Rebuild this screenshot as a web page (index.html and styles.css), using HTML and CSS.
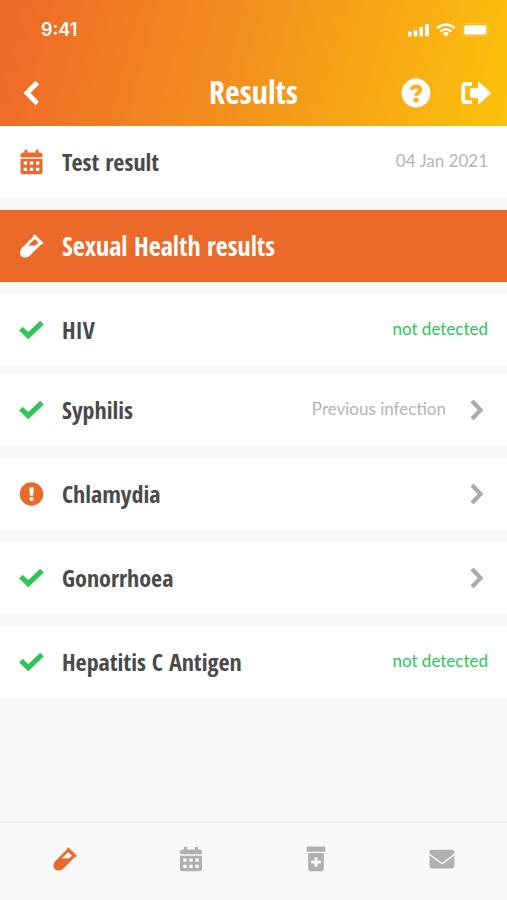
FILE: index.html
```html
<!DOCTYPE html>
<html lang="en">
<head>
<meta charset="utf-8">
<meta name="viewport" content="width=device-width, initial-scale=1">
<title>Results</title>
<link rel="stylesheet" href="styles.css">
</head>
<body>
<svg class="sprite" aria-hidden="true">
  <symbol id="calendar" viewBox="0 0 24 26">
    <path fill="currentColor" d="M1 8.200V6Q1 3.500 3.500 3.500H5V1.600Q5 .8 5.800 .8H7.200Q8 .8 8 1.600V3.500H16V1.600Q16 .8 16.800 .8H18.200Q19 .8 19 1.600V3.500H20.500Q23 3.500 23 6V8.200Z"/>
    <path fill="currentColor" fill-rule="evenodd" d="M1 9.800H23V23Q23 25.300 20.700 25.300H3.300Q1 25.300 1 23ZM4.200 12.400V15.800H7.600V12.400ZM10.300 12.400V15.800H13.700V12.400ZM16.400 12.400V15.800H19.800V12.400ZM4.200 18.700V22.100H7.600V18.700ZM10.300 18.700V22.100H13.700V18.700ZM16.400 18.700V22.100H19.800V18.700Z"/>
  </symbol>
  <symbol id="vial" viewBox="0 0 24 24">
    <path fill="currentColor" fill-rule="evenodd" d="M14.600 .6Q15.100 .1 15.600 .6L23.500 8.500Q24 9 23.500 9.500L22.700 10.200Q22.200 10.600 21.700 10.200L10.200 21.700Q8 23.700 5.500 23.600 .5 23.200 .4 18.500 .5 16 2.400 13.900L13.900 2.400Q13.500 1.900 13.900 1.400ZM15.300 4.900L8.700 11.500H15.900L19.100 8.700Z"/>
  </symbol>
  <symbol id="check" viewBox="0 0 25 20">
    <path fill="none" stroke="currentColor" stroke-width="5.200" d="M1.900 8.700L9.300 15.600 23 2.700"/>
  </symbol>
  <symbol id="chevron" viewBox="0 0 14 22">
    <path fill="none" stroke="currentColor" stroke-width="4.200" d="M2 2L10.600 11 2 20"/>
  </symbol>
</svg>

<div class="screen">
  <header class="header">
    <div class="status">
      <span class="time">9:41</span>
      <span class="signals">
        <svg width="22" height="14" viewBox="0 0 22 14" fill="#fff" aria-hidden="true">
          <rect x="0" y="8.500" width="3.600" height="5" rx="1"/><rect x="5.700" y="7" width="3.600" height="6.500" rx="1"/><rect x="11.400" y="4" width="3.600" height="9.500" rx="1"/><rect x="17.100" y="1" width="3.800" height="12.500" rx="1"/>
        </svg>
        <svg width="20" height="14" viewBox="0 0 20 14" fill="none" stroke="#fff" stroke-width="2.400" aria-hidden="true">
          <path d="M1.200 5.200Q10-2.400 18.800 5.200M4.500 8.600Q10 3.900 15.500 8.600"/><path fill="#fff" stroke="none" d="M6.700 10.400Q10 7.700 13.300 10.400L10 13.800Z"/>
        </svg>
        <svg width="29" height="14" viewBox="0 0 29 14" aria-hidden="true">
          <rect x=".6" y=".6" width="25.400" height="12.400" rx="3" fill="none" stroke="#fff" stroke-opacity=".25"/><rect x="2.300" y="2.200" width="22" height="9.200" rx="1.500" fill="#fff"/><path d="M27.200 4.800Q28.800 6.800 27.200 8.800Z" fill="#fff" fill-opacity=".3"/>
        </svg>
      </span>
    </div>
    <div class="titlebar">
      <button class="icon-button" type="button" aria-label="Back">
        <svg width="30" height="26" viewBox="0 0 30 26" fill="none" stroke="#fff" stroke-width="5" aria-hidden="true"><path d="M21.300 2.500L11 13 21.300 23.500"/></svg>
      </button>
      <h1 class="title">Results</h1>
      <div class="actions">
        <button class="icon-button" type="button" aria-label="Help">
          <svg width="30" height="30" viewBox="0 0 30 30" aria-hidden="true"><circle cx="15" cy="15" r="14.400" fill="#fff"/><path d="M10.300 11.600Q12 8.500 15.200 8.500 19.500 8.700 19.300 12 19.200 13.800 16.700 15.200 15.100 16.200 15.100 17.800" fill="none" stroke="#fbaf14" stroke-width="3.800"/><circle cx="15.100" cy="22" r="2.600" fill="#fbaf14"/></svg>
        </button>
        <button class="icon-button" type="button" aria-label="Log out">
          <svg width="30" height="24" viewBox="0 0 30 24" aria-hidden="true"><path d="M11 2.800H5Q2.200 2.800 2.200 5.600V18.400Q2.200 21.200 5 21.200H11" fill="none" stroke="#fff" stroke-width="3.800"/><path d="M9 9Q9 7.200 10.300 7.200H17V2.300Q17 .3 18.700 1.400L29.200 11.100Q30 12 29.200 12.900L18.700 22.600Q17 23.700 17 21.700V16.800H10.300Q9 16.800 9 15Z" fill="#fff"/></svg>
        </button>
      </div>
    </div>
  </header>

  <main class="content">
    <div class="row">
      <svg class="row-icon accent" height="26" aria-hidden="true"><use href="#calendar"/></svg>
      <span class="label">Test result</span>
      <time class="value" datetime="2021-01-04">04 Jan 2021</time>
    </div>
    <div class="row row-heading">
      <svg class="row-icon" height="24" aria-hidden="true"><use href="#vial"/></svg>
      <h2 class="label">Sexual Health results</h2>
    </div>
    <div class="pair">
      <div class="row">
        <svg class="row-icon good" height="20" aria-hidden="true"><use href="#check"/></svg>
        <span class="label">HIV</span>
        <span class="value good">not detected</span>
      </div>
      <a class="row" href="#syphilis">
        <svg class="row-icon good" height="20" aria-hidden="true"><use href="#check"/></svg>
        <span class="label">Syphilis</span>
        <span class="value">Previous infection</span>
        <svg class="chevron" width="14" height="22" aria-hidden="true"><use href="#chevron"/></svg>
      </a>
    </div>
    <a class="row" href="#chlamydia">
      <svg class="row-icon" height="24" viewBox="0 0 24 24" aria-hidden="true"><circle cx="12" cy="12" r="11.800" fill="#eb6a29"/><path d="M9.700 5.500H14.300L13.600 13.800H10.400Z" fill="#fff"/><circle cx="12" cy="17" r="2.100" fill="#fff"/></svg>
      <span class="label">Chlamydia</span>
      <svg class="chevron" width="14" height="22" aria-hidden="true"><use href="#chevron"/></svg>
    </a>
    <a class="row" href="#gonorrhoea">
      <svg class="row-icon good" height="20" aria-hidden="true"><use href="#check"/></svg>
      <span class="label">Gonorrhoea</span>
      <svg class="chevron" width="14" height="22" aria-hidden="true"><use href="#chevron"/></svg>
    </a>
    <div class="row">
      <svg class="row-icon good" height="20" aria-hidden="true"><use href="#check"/></svg>
      <span class="label">Hepatitis C Antigen</span>
      <span class="value good">not detected</span>
    </div>
  </main>

  <nav class="tabs" aria-label="Main">
    <a class="tab accent" href="#results" aria-label="Results" aria-current="page"><svg width="24" height="24" aria-hidden="true"><use href="#vial"/></svg></a>
    <a class="tab" href="#calendar-page" aria-label="Calendar"><svg width="24" height="26" aria-hidden="true"><use href="#calendar"/></svg></a>
    <a class="tab" href="#medication" aria-label="Medication"><svg width="20" height="26" viewBox="0 0 20 26" fill="currentColor" aria-hidden="true"><rect x=".6" y=".5" width="18.800" height="5.200" rx="1"/><path fill-rule="evenodd" d="M2.200 7H17.800V23Q17.800 25.300 15.500 25.300H4.500Q2.200 25.300 2.200 23ZM8.500 11.200V14.500H5.200V17.500H8.500V20.800H11.500V17.500H14.800V14.500H11.500V11.200Z"/></svg></a>
    <a class="tab" href="#messages" aria-label="Messages"><svg width="26" height="20" viewBox="0 0 26 20" fill="currentColor" aria-hidden="true"><path d="M.5 3.200Q.5 .8 2.900 .8H23.100Q25.500 .8 25.500 3.200V4.400L14.500 12.700Q13 13.700 11.500 12.700L.5 4.400Z"/><path d="M.5 6.300L11 14.200Q13 15.500 15 14.200L25.500 6.300V17Q25.500 19.400 23.100 19.400H2.900Q.5 19.400 .5 17Z"/></svg></a>
  </nav>
</div>
</body>
</html>
```
FILE: styles.css
```css
* {
  box-sizing: border-box;
}

body {
  margin: 0;
  background: #f7f7f7;
  color: #4a4a4a;
  font-family: "Open Sans Condensed", Lato, "Open Sans", sans-serif;
}

.sprite {
  display: none;
}

svg {
  display: block;
  flex: none;
}

.screen {
  display: flex;
  flex-direction: column;
  min-height: 100vh;
}

.header {
  height: 126px;
  color: #fff;
  background: linear-gradient(105deg, #ef672a 0%, #f3921c 50%, #fcc20b 100%);
}

.status {
  display: flex;
  align-items: center;
  justify-content: space-between;
  height: 60px;
  padding: 0 16px 0 41px;
}

.time {
  font: 600 18px/24px Inter, sans-serif;
}

.signals {
  display: flex;
  align-items: center;
  gap: 6px;
}

.titlebar {
  display: grid;
  grid-template-columns: 1fr auto 1fr;
  align-items: center;
  height: 66px;
  padding: 0 16px;
}

.title {
  margin: 0;
  padding-bottom: 2px;
  font-size: 32px;
  line-height: 36px;
  font-weight: 700;
}

.actions {
  display: flex;
  align-items: center;
  justify-content: flex-end;
  gap: 30px;
}

.icon-button {
  justify-self: start;
  padding: 0;
  border: 0;
  background: none;
  cursor: pointer;
}

.content {
  display: flex;
  flex: 1;
  flex-direction: column;
  gap: 12px;
}

.pair {
  display: flex;
  flex-direction: column;
  gap: 8px;
}

.row {
  display: flex;
  align-items: center;
  min-height: 72px;
  padding: 0 19px;
  background: #fff;
  color: inherit;
  text-decoration: none;
}

.row-heading {
  background: #eb6a29;
  color: #fff;
}

.row-icon {
  width: 25px;
  margin-right: 18px;
}

.label {
  flex: 1;
  margin: 0;
  font-size: 24px;
  line-height: 28px;
  font-weight: 700;
}

.row-heading .label {
  font-size: 26px;
}

.value {
  padding-bottom: 2px;
  color: #b5b5b5;
  font-family: Lato, "Open Sans", sans-serif;
  font-size: 17px;
  line-height: 24px;
}

.chevron {
  margin: 0 4px 0 24px;
  color: #adadad;
}

.accent {
  color: #eb6a29;
}

.good {
  color: #2fc558;
}

.tabs {
  display: grid;
  grid-template-columns: repeat(4, 1fr);
  height: 79px;
  padding: 0 2px;
  border-top: 2px solid #ebebeb;
  background: #f9f9f9;
}

.tab {
  display: flex;
  align-items: center;
  justify-content: center;
  padding-bottom: 6px;
  color: #b0b0b0;
}

.tab.accent {
  color: #eb6a29;
}
```
